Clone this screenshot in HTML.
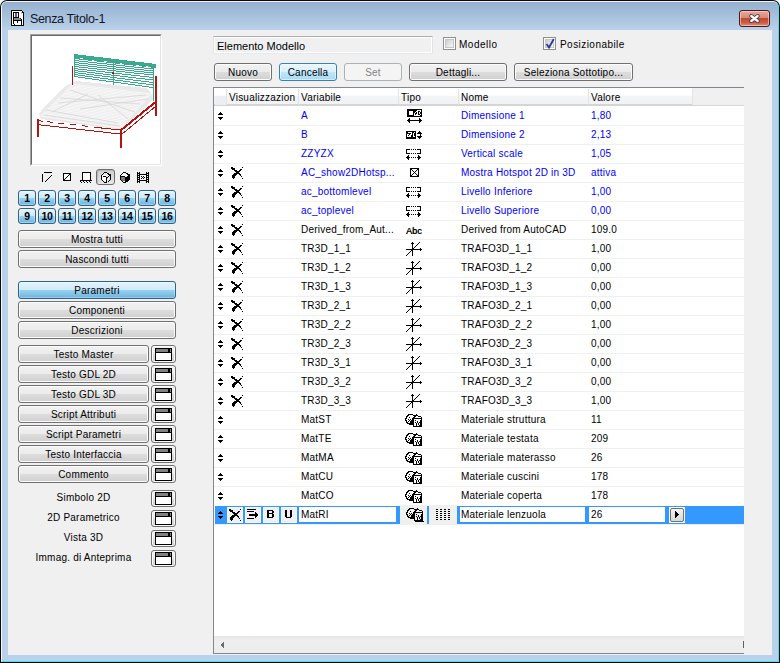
<!DOCTYPE html><html><head><meta charset="utf-8"><style>
*{margin:0;padding:0;box-sizing:border-box}
html,body{width:780px;height:663px;overflow:hidden;background:#fff}
body{position:relative;font-family:"Liberation Sans",sans-serif;font-size:11px;color:#000}
.t{position:absolute;white-space:nowrap;line-height:13px;font-size:10px;letter-spacing:0.22px}
.btn{position:absolute;border:1px solid #707070;border-radius:3px;background:linear-gradient(#f2f2f2 0%,#ebebeb 50%,#dddddd 51%,#cfcfcf 100%);box-shadow:inset 0 0 0 1px #fcfcfc;text-align:center;line-height:16px;padding-top:1px;white-space:nowrap;font-size:10px;letter-spacing:0.22px}
.nb{position:absolute;width:18px;height:16px;border:1px solid #2c628b;border-radius:3px;background:linear-gradient(#e5f4fc 0%,#cde9f8 48%,#98d1ef 52%,#6cb5df 100%);box-shadow:inset 0 0 0 1px rgba(255,255,255,.35);font-weight:bold;font-size:10.5px;text-align:center;line-height:15px;letter-spacing:-0.3px}
.wb{position:absolute;width:25px;height:18px;border:1px solid #707070;border-radius:3px;background:linear-gradient(#f2f2f2 0%,#ebebeb 50%,#dddddd 51%,#cfcfcf 100%);box-shadow:inset 0 0 0 1px #fcfcfc}
.wi{position:absolute;left:3px;top:2px;width:17px;height:13px;border:1px solid #000;background:#fff}
.wi:before{content:"";position:absolute;left:0;top:0;width:15px;height:3px;background:#808080;border-bottom:1px solid #000}
.wi:after{content:"";position:absolute;right:1px;top:0;width:2px;height:3px;background:#000}
.row{position:absolute;left:214px;width:530px;height:19px;border-bottom:1px solid #f0f0f0}
svg{position:absolute;shape-rendering:crispEdges}
</style></head><body>
<div style="position:absolute;left:0px;top:0px;width:780px;height:663px;background:#0a0a0a;border-radius:7px 7px 0 0;"></div>
<div style="position:absolute;left:1px;top:1px;width:778px;height:661px;background:#b9d1ea;border-radius:6px 6px 0 0;border-left:1px solid #f4f8fc;border-top:1px solid #eef4fa;border-right:1px solid #3ee4f4;border-bottom:1px solid #3ee4f4;"></div>
<div style="position:absolute;left:2px;top:2px;width:776px;height:28px;background:linear-gradient(#95b1cf,#b9d1ea);border-radius:5px 5px 0 0;"></div>
<div style="position:absolute;left:8px;top:30px;width:764px;height:625px;background:#f0f0f0;"></div>
<svg style="left:11px;top:10px" width="13" height="16" viewBox="11 10 13 16"><path d="M11 10h11v1h-11zM11 11h1v1h-1zM22 11h1v1h-1zM11 12h1v1h-1zM13 12h6v1h-6zM22 12h2v1h-2zM11 13h1v1h-1zM13 13h1v1h-1zM18 13h1v1h-1zM23 13h1v1h-1zM11 14h1v1h-1zM13 14h1v1h-1zM18 14h1v1h-1zM23 14h1v1h-1zM11 15h1v1h-1zM13 15h1v1h-1zM18 15h1v1h-1zM23 15h1v1h-1zM11 16h1v1h-1zM13 16h1v1h-1zM18 16h1v1h-1zM23 16h1v1h-1zM11 17h1v1h-1zM13 17h6v1h-6zM23 17h1v1h-1zM11 18h1v1h-1zM13 18h1v1h-1zM20 18h1v1h-1zM23 18h1v1h-1zM11 19h1v1h-1zM13 19h1v1h-1zM21 19h1v1h-1zM23 19h1v1h-1zM11 20h1v1h-1zM13 20h9v1h-9zM23 20h1v1h-1zM11 21h1v1h-1zM13 21h1v1h-1zM17 21h1v1h-1zM21 21h1v1h-1zM23 21h1v1h-1zM11 22h1v1h-1zM13 22h1v1h-1zM17 22h1v1h-1zM21 22h1v1h-1zM23 22h1v1h-1zM11 23h1v1h-1zM13 23h1v1h-1zM21 23h1v1h-1zM23 23h1v1h-1zM11 24h1v1h-1zM14 24h1v1h-1zM21 24h1v1h-1zM23 24h1v1h-1zM11 25h13v1h-13z" fill="#000"/><path d="M12 11h10v1h-10zM12 12h1v1h-1zM19 12h2v1h-2zM12 13h1v1h-1zM14 13h1v1h-1zM17 13h1v1h-1zM19 13h2v1h-2zM22 13h1v1h-1zM12 14h1v1h-1zM14 14h1v1h-1zM17 14h1v1h-1zM19 14h4v1h-4zM12 15h1v1h-1zM14 15h1v1h-1zM17 15h1v1h-1zM19 15h4v1h-4zM12 16h1v1h-1zM14 16h1v1h-1zM17 16h1v1h-1zM19 16h4v1h-4zM12 17h1v1h-1zM19 17h4v1h-4zM12 18h1v1h-1zM21 18h2v1h-2zM12 19h1v1h-1zM22 19h1v1h-1zM12 20h1v1h-1zM22 20h1v1h-1zM12 21h1v1h-1zM14 21h3v1h-3zM18 21h3v1h-3zM22 21h1v1h-1zM12 22h1v1h-1zM14 22h3v1h-3zM18 22h3v1h-3zM22 22h1v1h-1zM12 23h1v1h-1zM14 23h7v1h-7zM22 23h1v1h-1zM12 24h2v1h-2zM15 24h6v1h-6zM22 24h1v1h-1z" fill="#fff"/><path d="M15 13h2v1h-2zM15 14h2v1h-2zM15 15h2v1h-2zM15 16h2v1h-2z" fill="#5a5aa0"/><path d="M14 18h6v1h-6zM14 19h7v1h-7z" fill="#8a8a8a"/></svg>
<div class="t" style="left:30px;top:11px;font-size:12.5px;line-height:16px;letter-spacing:-0.35px;color:#141428">Senza Titolo-1</div>
<div style="position:absolute;left:739px;top:10px;width:31px;height:17px;border:1px solid #4a1820;border-radius:3px;background:linear-gradient(#eaa89a 0%,#d98a78 45%,#c14a30 50%,#c85a40 75%,#e08a70 100%);box-shadow:inset 0 0 0 1px rgba(255,220,210,.6)"></div>
<svg style="left:747px;top:12px;shape-rendering:auto" width="15" height="13" viewBox="0 0 15 13"><path d="M4.3 4L10.7 9M10.7 4L4.3 9" stroke="#3a2a40" stroke-width="4" stroke-linecap="round"/><path d="M4.3 4L10.7 9M10.7 4L4.3 9" stroke="#fff" stroke-width="2.3" stroke-linecap="round"/></svg>
<div style="position:absolute;left:30px;top:34px;width:132px;height:132px;background:#fff;border-top:1px solid #a0a0a0;border-left:1px solid #a0a0a0;border-right:1px solid #fff;border-bottom:1px solid #fff;"></div>
<div style="position:absolute;left:31px;top:35px;width:130px;height:130px;border-top:1px solid #696969;border-left:1px solid #696969;border-right:1px solid #e3e3e3;border-bottom:1px solid #e3e3e3;"></div>
<svg style="left:32px;top:36px;shape-rendering:crispEdges" width="128" height="128" viewBox="32 36 128 128">
<path d="M39 114 L44 107 L66 86 L76 81 L146 88 L151 92 L153 100 L122 128 L116 129 L41 119 Z" fill="#e9e9e9"/>
<path d="M40.0 116.0 L121.0 128.0 M41.3 114.7 L122.2 126.6 M42.6 113.4 L123.5 125.3 M43.8 112.2 L124.7 123.9 M45.1 110.9 L126.0 122.6 M46.4 109.6 L127.2 121.2 M47.7 108.3 L128.4 119.8 M49.0 107.0 L129.7 118.5 M50.2 105.8 L130.9 117.1 M51.5 104.5 L132.2 115.8 M52.8 103.2 L133.4 114.4 M54.1 101.9 L134.6 113.0 M55.4 100.6 L135.9 111.7 M56.6 99.4 L137.1 110.3 M57.9 98.1 L138.4 109.0 M59.2 96.8 L139.6 107.6 M60.5 95.5 L140.8 106.2 M61.8 94.2 L142.1 104.9 M63.0 93.0 L143.3 103.5 M64.3 91.7 L144.6 102.2 M65.6 90.4 L145.8 100.8 M66.9 89.1 L147.0 99.4 M68.2 87.8 L148.3 98.1 M69.4 86.6 L149.5 96.7 M70.7 85.3 L150.8 95.4 M72.0 84.0 L152.0 94.0" stroke="#fbfbfb" stroke-width="0.8" fill="none" style="shape-rendering:auto"/>
<path d="M46 110 L118 123 M60 98 L140 104 M70 90 L135 112 M52 112 L88 94 M98 95 L128 119 M58 103 L146 95 M80 109 L148 99 M44 115 L120 126" stroke="#d9d9d9" stroke-width="0.9" fill="none" style="shape-rendering:auto"/>
<path d="M74 54 L156 64 L156 68 L74 59 Z" fill="#3aa98e"/>
<path d="M80 58.5h3M92 60h2M104 61h3M120 63h2M136 65h3M146 66h2" stroke="#fff" stroke-width="1"/>
<path d="M74 60.5 L153 69 M74 62.5 L153 71 M74 64.5 L153 73 M74 66.5 L153 75 M74 68.5 L153 77.5 M74 70.5 L153 80 M74 72.5 L153 82.5 M74 74.5 L153 85 M74 76.5 L153 87.5 " stroke="#3aa98e" stroke-width="1" fill="none"/>
<path d="M74 54 L74 77 M113 61 L113 85 M153 66 L153 101" stroke="#3aa98e" stroke-width="1" fill="none"/>
<path d="M72.5 66 L72.5 85" stroke="#b4140f" stroke-width="1.3" fill="none"/>
<rect x="112" y="72" width="2" height="2" fill="#b4140f"/>
<path d="M155.5 76 L155.5 116" stroke="#b4140f" stroke-width="2" fill="none"/>
<path d="M37.5 119 L37.5 137 M120.5 130 L120.5 148" stroke="#b4140f" stroke-width="2" fill="none"/>
<path d="M37 124.5 L120 134" stroke="#b4140f" stroke-width="1" fill="none"/>
<path d="M37 120.5 L43 121.2 M47 121.7 L53 122.4 M58 123 L64 123.7 M70 124.4 L76 125 M82 125.7 L88 126.4 M94 127.2 L120 130" stroke="#b4140f" stroke-width="1" fill="none"/>
<path d="M120 131 L155.5 102" stroke="#b4140f" stroke-width="2" fill="none"/>
<path d="M121.5 134.5 L156 106" stroke="#b4140f" stroke-width="1" fill="none"/>
</svg>
<div style="position:absolute;left:96px;top:169px;width:19px;height:16px;border:1px solid #6f6f6f;border-radius:3px;background:linear-gradient(#cfcfcf,#e6e6e6);box-shadow:inset 1px 1px 1px #b8b8b8"></div>
<svg style="left:40px;top:170px" width="115" height="16" viewBox="40 170 115 16"><rect x="82" y="172" width="9" height="8" fill="#fff"/><rect x="64" y="174" width="6" height="6" fill="#fff"/><rect x="102" y="173" width="8" height="9" fill="#f4f4f4" opacity=".6"/><path d="M102 175h4v1h-4zM102 176h4v5h-4z" fill="#fff"/><path d="M121 174h6v1h-6zM122 173h3v1h-3zM121 175h6v1h-6z" fill="#fff"/><rect x="121" y="177" width="4" height="4" fill="#7a7a7a"/><rect x="140" y="175" width="6" height="5" fill="#fff"/><path d="M44 172h8v1h-8zM42 174h1v1h-1zM42 175h1v1h-1zM51 175h1v1h-1zM42 176h1v1h-1zM50 176h1v1h-1zM42 177h1v1h-1zM49 177h1v1h-1zM42 178h1v1h-1zM48 178h1v1h-1zM42 179h1v1h-1zM47 179h1v1h-1zM42 180h1v1h-1zM46 180h1v1h-1zM42 181h1v1h-1zM45 181h1v1h-1z" fill="#000"/><path d="M63 173h8v1h-8zM63 174h1v1h-1zM69 174h2v1h-2zM63 175h1v1h-1zM68 175h1v1h-1zM70 175h1v1h-1zM63 176h1v1h-1zM67 176h1v1h-1zM70 176h1v1h-1zM63 177h1v1h-1zM66 177h1v1h-1zM70 177h1v1h-1zM63 178h1v1h-1zM65 178h1v1h-1zM70 178h1v1h-1zM63 179h2v1h-2zM70 179h1v1h-1zM63 180h8v1h-8z" fill="#000"/><path d="M82 172h9v1h-9zM82 173h1v1h-1zM90 173h1v1h-1zM82 174h1v1h-1zM90 174h1v1h-1zM82 175h1v1h-1zM90 175h1v1h-1zM82 176h1v1h-1zM90 176h1v1h-1zM82 177h1v1h-1zM90 177h1v1h-1zM82 178h1v1h-1zM90 178h1v1h-1zM82 179h1v1h-1zM90 179h1v1h-1z" fill="#000"/><path d="M80 180h12v1h-12zM80 181h1v1h-1zM83 181h1v1h-1zM86 181h1v1h-1zM89 181h1v1h-1zM81 182h1v1h-1zM84 182h1v1h-1zM87 182h1v1h-1zM90 182h1v1h-1z" fill="#000"/><path d="M104 172h3v1h-3zM103 173h1v1h-1zM107 173h2v1h-2zM102 174h1v1h-1zM108 174h3v1h-3zM101 175h1v1h-1zM109 175h2v1h-2zM101 176h1v1h-1zM103 176h3v1h-3zM108 176h1v1h-1zM110 176h1v1h-1zM101 177h1v1h-1zM106 177h2v1h-2zM110 177h1v1h-1zM101 178h1v1h-1zM106 178h1v1h-1zM110 178h1v1h-1zM101 179h1v1h-1zM106 179h1v1h-1zM110 179h1v1h-1zM102 180h1v1h-1zM106 180h1v1h-1zM109 180h1v1h-1zM103 181h1v1h-1zM106 181h1v1h-1zM108 181h1v1h-1zM104 182h3v1h-3z" fill="#000"/><path d="M123 172h3v1h-3zM122 173h1v1h-1zM126 173h2v1h-2zM121 174h1v1h-1zM127 174h3v1h-3zM120 175h1v1h-1zM128 175h2v1h-2zM120 176h5v1h-5zM127 176h3v1h-3zM120 177h1v1h-1zM125 177h5v1h-5zM120 178h1v1h-1zM125 178h5v1h-5zM120 179h1v1h-1zM125 179h5v1h-5zM121 180h1v1h-1zM125 180h4v1h-4zM122 181h1v1h-1zM125 181h3v1h-3zM123 182h3v1h-3z" fill="#000"/><path d="M137 172h1v1h-1zM139 172h1v1h-1zM146 172h1v1h-1zM148 172h1v1h-1zM137 173h3v1h-3zM146 173h3v1h-3zM137 174h1v1h-1zM139 174h8v1h-8zM148 174h1v1h-1zM137 175h3v1h-3zM146 175h3v1h-3zM137 176h1v1h-1zM139 176h1v1h-1zM141 176h1v1h-1zM143 176h1v1h-1zM146 176h1v1h-1zM148 176h1v1h-1zM137 177h3v1h-3zM142 177h1v1h-1zM144 177h1v1h-1zM146 177h3v1h-3zM137 178h1v1h-1zM139 178h1v1h-1zM141 178h1v1h-1zM143 178h1v1h-1zM146 178h1v1h-1zM148 178h1v1h-1zM137 179h3v1h-3zM146 179h3v1h-3zM137 180h1v1h-1zM139 180h8v1h-8zM148 180h1v1h-1zM137 181h3v1h-3zM146 181h3v1h-3zM137 182h1v1h-1zM139 182h1v1h-1zM146 182h1v1h-1zM148 182h1v1h-1z" fill="#000"/></svg>
<div class="nb" style="left:18px;top:190px">1</div>
<div class="nb" style="left:38px;top:190px">2</div>
<div class="nb" style="left:58px;top:190px">3</div>
<div class="nb" style="left:78px;top:190px">4</div>
<div class="nb" style="left:98px;top:190px">5</div>
<div class="nb" style="left:118px;top:190px">6</div>
<div class="nb" style="left:138px;top:190px">7</div>
<div class="nb" style="left:158px;top:190px">8</div>
<div class="nb" style="left:18px;top:208px">9</div>
<div class="nb" style="left:38px;top:208px">10</div>
<div class="nb" style="left:58px;top:208px">11</div>
<div class="nb" style="left:78px;top:208px">12</div>
<div class="nb" style="left:98px;top:208px">13</div>
<div class="nb" style="left:118px;top:208px">14</div>
<div class="nb" style="left:138px;top:208px">15</div>
<div class="nb" style="left:158px;top:208px">16</div>
<div class="btn" style="left:18px;top:230px;width:158px;height:18px;">Mostra tutti</div>
<div class="btn" style="left:18px;top:250px;width:158px;height:18px;">Nascondi tutti</div>
<div class="btn" style="left:18px;top:281px;width:158px;height:18px;border-color:#2c628b;background:linear-gradient(#e5f4fc 0%,#cfeaf8 48%,#98d1ef 52%,#6cb4de 100%);box-shadow:inset 0 0 0 1px rgba(255,255,255,.3)">Parametri</div>
<div class="btn" style="left:18px;top:301px;width:158px;height:18px;">Componenti</div>
<div class="btn" style="left:18px;top:321px;width:158px;height:18px;">Descrizioni</div>
<div class="btn" style="left:18px;top:345px;width:131px;height:18px;">Testo Master</div>
<div class="wb" style="left:151px;top:345px"><div class="wi"></div></div>
<div class="btn" style="left:18px;top:365px;width:131px;height:18px;">Testo GDL 2D</div>
<div class="wb" style="left:151px;top:365px"><div class="wi"></div></div>
<div class="btn" style="left:18px;top:385px;width:131px;height:18px;">Testo GDL 3D</div>
<div class="wb" style="left:151px;top:385px"><div class="wi"></div></div>
<div class="btn" style="left:18px;top:405px;width:131px;height:18px;">Script Attributi</div>
<div class="wb" style="left:151px;top:405px"><div class="wi"></div></div>
<div class="btn" style="left:18px;top:425px;width:131px;height:18px;">Script Parametri</div>
<div class="wb" style="left:151px;top:425px"><div class="wi"></div></div>
<div class="btn" style="left:18px;top:445px;width:131px;height:18px;">Testo Interfaccia</div>
<div class="wb" style="left:151px;top:445px"><div class="wi"></div></div>
<div class="btn" style="left:18px;top:465px;width:131px;height:18px;">Commento</div>
<div class="wb" style="left:151px;top:465px"><div class="wi"></div></div>
<div class="t" style="left:18px;top:491px;width:131px;text-align:center">Simbolo 2D</div>
<div class="wb" style="left:151px;top:490px;height:17px"><div class="wi" style="top:1px"></div></div>
<div class="t" style="left:18px;top:511px;width:131px;text-align:center">2D Parametrico</div>
<div class="wb" style="left:151px;top:510px;height:17px"><div class="wi" style="top:1px"></div></div>
<div class="t" style="left:18px;top:531px;width:131px;text-align:center">Vista 3D</div>
<div class="wb" style="left:151px;top:530px;height:17px"><div class="wi" style="top:1px"></div></div>
<div class="t" style="left:18px;top:551px;width:131px;text-align:center">Immag. di Anteprima</div>
<div class="wb" style="left:151px;top:550px;height:17px"><div class="wi" style="top:1px"></div></div>
<div style="position:absolute;left:213px;top:36px;width:220px;height:18px;border:1px solid #abadb3;border-left-color:#e2e3ea;border-right-color:#e2e3ea;border-bottom-color:#e3e9ef;background:#f0f0f0;box-shadow:inset 0 0 0 1px #fff;border-radius:1px"></div>
<div class="t" style="left:217px;top:40px;font-size:11px;letter-spacing:0">Elemento Modello</div>
<div style="position:absolute;left:443px;top:37px;width:13px;height:13px;border:1px solid #8e8f8f;background:#fff"><div style="position:absolute;left:1px;top:1px;width:9px;height:9px;border:1px solid #c6c6c6;background:linear-gradient(135deg,#cbcfd5,#f6f6f6)"></div></div>
<div class="t" style="left:459px;top:38px;letter-spacing:0.5px">Modello</div>
<div style="position:absolute;left:543px;top:37px;width:13px;height:13px;border:1px solid #8e8f8f;background:#fff"><div style="position:absolute;left:1px;top:1px;width:9px;height:9px;border:1px solid #c6c6c6;background:linear-gradient(135deg,#cbcfd5,#f6f6f6)"></div></div>
<svg style="left:545px;top:38px;shape-rendering:auto" width="10" height="11" viewBox="0 0 10 11"><path d="M1.5 6 L4 9.5 L8.8 1" stroke="#2a3a90" stroke-width="1.8" fill="none"/></svg>
<div class="t" style="left:560px;top:38px;letter-spacing:0.45px">Posizionabile</div>
<div class="btn" style="left:214px;top:63px;width:58px;height:18px;">Nuovo</div>
<div class="btn" style="left:279px;top:63px;width:58px;height:18px;border-color:#3c7fb1;background:linear-gradient(#eaf6fd 0%,#d9f0fc 50%,#bee6fd 51%,#a7d9f5 100%);box-shadow:inset 0 0 0 1px rgba(255,255,255,.5)">Cancella</div>
<div class="btn" style="left:344px;top:63px;width:58px;height:18px;border-color:#adb2b5;background:#f4f4f4;box-shadow:none;color:#838383">Set</div>
<div class="btn" style="left:409px;top:63px;width:98px;height:18px;">Dettagli...</div>
<div class="btn" style="left:514px;top:63px;width:119px;height:18px;">Seleziona Sottotipo...</div>
<div style="position:absolute;left:213px;top:87px;width:531px;height:567px;background:#fff;border-left:1px solid #828790;border-top:1px solid #828790;border-bottom:1px solid #828790;"></div>
<div style="position:absolute;left:692px;top:88px;width:52px;height:18px;background:#f0f0f0;"></div>
<div style="position:absolute;left:214px;top:88px;width:478px;height:17px;background:linear-gradient(#fff 0%,#fff 45%,#f3f4f6 50%,#f1f2f4 100%);border-bottom:1px solid #d5d5d5"></div>
<div style="position:absolute;left:214px;top:105px;width:530px;height:1px;background:#d5d5d5"></div>
<div style="position:absolute;left:226px;top:89px;width:1px;height:16px;background:#e2e3e5"></div>
<div style="position:absolute;left:298px;top:89px;width:1px;height:16px;background:#e2e3e5"></div>
<div style="position:absolute;left:398px;top:89px;width:1px;height:16px;background:#e2e3e5"></div>
<div style="position:absolute;left:458px;top:89px;width:1px;height:16px;background:#e2e3e5"></div>
<div style="position:absolute;left:588px;top:89px;width:1px;height:16px;background:#e2e3e5"></div>
<div style="position:absolute;left:692px;top:89px;width:1px;height:16px;background:#e2e3e5"></div>
<div style="position:absolute;left:215px;top:96px;width:11px;height:9px;background:#eceef1"></div>
<div class="t" style="left:229px;top:91px;">Visualizzazion</div>
<div class="t" style="left:301px;top:91px;">Variabile</div>
<div class="t" style="left:401px;top:91px;">Tipo</div>
<div class="t" style="left:461px;top:91px;">Nome</div>
<div class="t" style="left:591px;top:91px;">Valore</div>
<div style="position:absolute;left:214px;top:125px;width:530px;height:1px;background:#f0f0f0"></div>
<div style="position:absolute;left:214px;top:144px;width:530px;height:1px;background:#f0f0f0"></div>
<div style="position:absolute;left:214px;top:163px;width:530px;height:1px;background:#f0f0f0"></div>
<div style="position:absolute;left:214px;top:182px;width:530px;height:1px;background:#f0f0f0"></div>
<div style="position:absolute;left:214px;top:201px;width:530px;height:1px;background:#f0f0f0"></div>
<div style="position:absolute;left:214px;top:220px;width:530px;height:1px;background:#f0f0f0"></div>
<div style="position:absolute;left:214px;top:239px;width:530px;height:1px;background:#f0f0f0"></div>
<div style="position:absolute;left:214px;top:258px;width:530px;height:1px;background:#f0f0f0"></div>
<div style="position:absolute;left:214px;top:277px;width:530px;height:1px;background:#f0f0f0"></div>
<div style="position:absolute;left:214px;top:296px;width:530px;height:1px;background:#f0f0f0"></div>
<div style="position:absolute;left:214px;top:315px;width:530px;height:1px;background:#f0f0f0"></div>
<div style="position:absolute;left:214px;top:334px;width:530px;height:1px;background:#f0f0f0"></div>
<div style="position:absolute;left:214px;top:353px;width:530px;height:1px;background:#f0f0f0"></div>
<div style="position:absolute;left:214px;top:372px;width:530px;height:1px;background:#f0f0f0"></div>
<div style="position:absolute;left:214px;top:391px;width:530px;height:1px;background:#f0f0f0"></div>
<div style="position:absolute;left:214px;top:410px;width:530px;height:1px;background:#f0f0f0"></div>
<div style="position:absolute;left:214px;top:429px;width:530px;height:1px;background:#f0f0f0"></div>
<div style="position:absolute;left:214px;top:448px;width:530px;height:1px;background:#f0f0f0"></div>
<div style="position:absolute;left:214px;top:467px;width:530px;height:1px;background:#f0f0f0"></div>
<div style="position:absolute;left:214px;top:486px;width:530px;height:1px;background:#f0f0f0"></div>
<div style="position:absolute;left:214px;top:505px;width:530px;height:1px;background:#f0f0f0"></div>
<div style="position:absolute;left:214px;top:524px;width:530px;height:1px;background:#f0f0f0"></div>
<div class="t" style="left:301px;top:109px;color:#0000ff">A</div>
<div class="t" style="left:461px;top:109px;color:#0000ff">Dimensione 1</div>
<div class="t" style="left:591px;top:109px;color:#0000ff">1,80</div>
<div class="t" style="left:301px;top:128px;color:#0000ff">B</div>
<div class="t" style="left:461px;top:128px;color:#0000ff">Dimensione 2</div>
<div class="t" style="left:591px;top:128px;color:#0000ff">2,13</div>
<div class="t" style="left:301px;top:147px;color:#0000ff">ZZYZX</div>
<div class="t" style="left:461px;top:147px;color:#0000ff">Vertical scale</div>
<div class="t" style="left:591px;top:147px;color:#0000ff">1,05</div>
<div class="t" style="left:301px;top:166px;color:#0000ff">AC_show2DHotsp...</div>
<div class="t" style="left:461px;top:166px;color:#0000ff">Mostra Hotspot 2D in 3D</div>
<div class="t" style="left:591px;top:166px;color:#0000ff">attiva</div>
<div class="t" style="left:301px;top:185px;color:#0000ff">ac_bottomlevel</div>
<div class="t" style="left:461px;top:185px;color:#0000ff">Livello Inferiore</div>
<div class="t" style="left:591px;top:185px;color:#0000ff">1,00</div>
<div class="t" style="left:301px;top:204px;color:#0000ff">ac_toplevel</div>
<div class="t" style="left:461px;top:204px;color:#0000ff">Livello Superiore</div>
<div class="t" style="left:591px;top:204px;color:#0000ff">0,00</div>
<div class="t" style="left:301px;top:223px;color:#000">Derived_from_Aut...</div>
<div class="t" style="left:461px;top:223px;color:#000">Derived from AutoCAD</div>
<div class="t" style="left:591px;top:223px;color:#000">109.0</div>
<div class="t" style="left:406px;top:225px;font-size:9px;letter-spacing:0.1px;text-shadow:0.35px 0 0 #000">Abc</div>
<div class="t" style="left:301px;top:242px;color:#000">TR3D_1_1</div>
<div class="t" style="left:461px;top:242px;color:#000">TRAFO3D_1_1</div>
<div class="t" style="left:591px;top:242px;color:#000">1,00</div>
<div class="t" style="left:301px;top:261px;color:#000">TR3D_1_2</div>
<div class="t" style="left:461px;top:261px;color:#000">TRAFO3D_1_2</div>
<div class="t" style="left:591px;top:261px;color:#000">0,00</div>
<div class="t" style="left:301px;top:280px;color:#000">TR3D_1_3</div>
<div class="t" style="left:461px;top:280px;color:#000">TRAFO3D_1_3</div>
<div class="t" style="left:591px;top:280px;color:#000">0,00</div>
<div class="t" style="left:301px;top:299px;color:#000">TR3D_2_1</div>
<div class="t" style="left:461px;top:299px;color:#000">TRAFO3D_2_1</div>
<div class="t" style="left:591px;top:299px;color:#000">0,00</div>
<div class="t" style="left:301px;top:318px;color:#000">TR3D_2_2</div>
<div class="t" style="left:461px;top:318px;color:#000">TRAFO3D_2_2</div>
<div class="t" style="left:591px;top:318px;color:#000">1,00</div>
<div class="t" style="left:301px;top:337px;color:#000">TR3D_2_3</div>
<div class="t" style="left:461px;top:337px;color:#000">TRAFO3D_2_3</div>
<div class="t" style="left:591px;top:337px;color:#000">0,00</div>
<div class="t" style="left:301px;top:356px;color:#000">TR3D_3_1</div>
<div class="t" style="left:461px;top:356px;color:#000">TRAFO3D_3_1</div>
<div class="t" style="left:591px;top:356px;color:#000">0,00</div>
<div class="t" style="left:301px;top:375px;color:#000">TR3D_3_2</div>
<div class="t" style="left:461px;top:375px;color:#000">TRAFO3D_3_2</div>
<div class="t" style="left:591px;top:375px;color:#000">0,00</div>
<div class="t" style="left:301px;top:394px;color:#000">TR3D_3_3</div>
<div class="t" style="left:461px;top:394px;color:#000">TRAFO3D_3_3</div>
<div class="t" style="left:591px;top:394px;color:#000">1,00</div>
<div class="t" style="left:301px;top:413px;color:#000">MatST</div>
<div class="t" style="left:461px;top:413px;color:#000">Materiale struttura</div>
<div class="t" style="left:591px;top:413px;color:#000">11</div>
<div class="t" style="left:301px;top:432px;color:#000">MatTE</div>
<div class="t" style="left:461px;top:432px;color:#000">Materiale testata</div>
<div class="t" style="left:591px;top:432px;color:#000">209</div>
<div class="t" style="left:301px;top:451px;color:#000">MatMA</div>
<div class="t" style="left:461px;top:451px;color:#000">Materiale materasso</div>
<div class="t" style="left:591px;top:451px;color:#000">26</div>
<div class="t" style="left:301px;top:470px;color:#000">MatCU</div>
<div class="t" style="left:461px;top:470px;color:#000">Materiale cuscini</div>
<div class="t" style="left:591px;top:470px;color:#000">178</div>
<div class="t" style="left:301px;top:489px;color:#000">MatCO</div>
<div class="t" style="left:461px;top:489px;color:#000">Materiale coperta</div>
<div class="t" style="left:591px;top:489px;color:#000">178</div>
<svg style="left:214px;top:107px" width="530" height="420" viewBox="214 107 530 420"><path d="M220 112h1v1h-1zM219 113h3v1h-3zM218 114h5v1h-5zM218 117h5v1h-5zM219 118h3v1h-3zM220 119h1v1h-1z" fill="#000"/><path d="M407 109h15v1h-15zM407 110h10v1h-10zM421 110h1v1h-1zM407 111h2v1h-2zM413 111h3v1h-3zM418 111h2v1h-2zM421 111h1v1h-1zM407 112h2v1h-2zM413 112h2v1h-2zM416 112h1v1h-1zM418 112h1v1h-1zM420 112h2v1h-2zM407 113h2v1h-2zM413 113h1v1h-1zM415 113h2v1h-2zM418 113h1v1h-1zM420 113h2v1h-2zM407 114h2v1h-2zM413 114h1v1h-1zM415 114h1v1h-1zM418 114h2v1h-2zM421 114h1v1h-1zM407 115h7v1h-7zM420 115h2v1h-2zM407 116h15v1h-15zM409 118h1v1h-1zM419 118h1v1h-1zM408 119h2v1h-2zM419 119h2v1h-2zM407 120h15v1h-15zM408 121h2v1h-2zM419 121h2v1h-2zM409 122h1v1h-1zM419 122h1v1h-1z" fill="#000"/><path d="M220 131h1v1h-1zM219 132h3v1h-3zM218 133h5v1h-5zM218 136h5v1h-5zM219 137h3v1h-3zM220 138h1v1h-1z" fill="#000"/><path d="M406 131h10v1h-10zM419 131h1v1h-1zM406 132h2v1h-2zM412 132h2v1h-2zM415 132h1v1h-1zM418 132h3v1h-3zM406 133h5v1h-5zM412 133h1v1h-1zM414 133h2v1h-2zM417 133h5v1h-5zM406 134h1v1h-1zM409 134h1v1h-1zM412 134h1v1h-1zM414 134h2v1h-2zM420 134h1v1h-1zM406 135h1v1h-1zM408 135h1v1h-1zM411 135h2v1h-2zM414 135h2v1h-2zM420 135h1v1h-1zM406 136h1v1h-1zM411 136h2v1h-2zM415 136h1v1h-1zM417 136h5v1h-5zM406 137h10v1h-10zM418 137h3v1h-3zM406 138h10v1h-10zM419 138h1v1h-1z" fill="#000"/><path d="M220 150h1v1h-1zM219 151h3v1h-3zM218 152h5v1h-5zM218 155h5v1h-5zM219 156h3v1h-3zM220 157h1v1h-1z" fill="#000"/><path d="M406 149h4v1h-4zM411 149h1v1h-1zM413 149h1v1h-1zM415 149h1v1h-1zM417 149h4v1h-4zM406 150h1v1h-1zM420 150h1v1h-1zM406 151h1v1h-1zM420 151h1v1h-1zM406 152h1v1h-1zM420 152h1v1h-1zM406 153h4v1h-4zM411 153h1v1h-1zM413 153h1v1h-1zM415 153h1v1h-1zM417 153h4v1h-4zM408 155h1v1h-1zM418 155h1v1h-1zM407 156h2v1h-2zM418 156h2v1h-2zM406 157h4v1h-4zM411 157h1v1h-1zM413 157h1v1h-1zM415 157h1v1h-1zM417 157h4v1h-4zM407 158h2v1h-2zM418 158h2v1h-2zM408 159h1v1h-1zM418 159h1v1h-1z" fill="#000"/><path d="M220 169h1v1h-1zM219 170h3v1h-3zM218 171h5v1h-5zM218 174h5v1h-5zM219 175h3v1h-3zM220 176h1v1h-1z" fill="#000"/><path d="M231 167h2v1h-2zM242 167h1v1h-1zM231 168h4v1h-4zM232 169h3v1h-3zM240 169h2v1h-2zM234 170h3v1h-3zM239 170h2v1h-2zM235 171h5v1h-5zM236 172h3v1h-3zM234 173h6v1h-6zM233 174h4v1h-4zM239 174h2v1h-2zM232 175h4v1h-4zM240 175h1v1h-1zM232 176h3v1h-3zM241 176h1v1h-1zM232 177h3v1h-3zM233 178h1v1h-1zM242 178h1v1h-1z" fill="#000"/><path d="M410 168h9v1h-9zM410 169h2v1h-2zM417 169h2v1h-2zM410 170h1v1h-1zM412 170h1v1h-1zM416 170h1v1h-1zM418 170h1v1h-1zM410 171h1v1h-1zM413 171h1v1h-1zM415 171h1v1h-1zM418 171h1v1h-1zM410 172h1v1h-1zM414 172h1v1h-1zM418 172h1v1h-1zM410 173h1v1h-1zM413 173h1v1h-1zM415 173h1v1h-1zM418 173h1v1h-1zM410 174h1v1h-1zM412 174h1v1h-1zM416 174h1v1h-1zM418 174h1v1h-1zM410 175h2v1h-2zM417 175h2v1h-2zM410 176h9v1h-9z" fill="#000"/><path d="M220 188h1v1h-1zM219 189h3v1h-3zM218 190h5v1h-5zM218 193h5v1h-5zM219 194h3v1h-3zM220 195h1v1h-1z" fill="#000"/><path d="M231 186h2v1h-2zM242 186h1v1h-1zM231 187h4v1h-4zM232 188h3v1h-3zM240 188h2v1h-2zM234 189h3v1h-3zM239 189h2v1h-2zM235 190h5v1h-5zM236 191h3v1h-3zM234 192h6v1h-6zM233 193h4v1h-4zM239 193h2v1h-2zM232 194h4v1h-4zM240 194h1v1h-1zM232 195h3v1h-3zM241 195h1v1h-1zM232 196h3v1h-3zM233 197h1v1h-1zM242 197h1v1h-1z" fill="#000"/><path d="M406 187h4v1h-4zM411 187h1v1h-1zM413 187h1v1h-1zM415 187h1v1h-1zM417 187h4v1h-4zM406 188h1v1h-1zM420 188h1v1h-1zM406 189h1v1h-1zM420 189h1v1h-1zM406 190h1v1h-1zM420 190h1v1h-1zM406 191h4v1h-4zM411 191h1v1h-1zM413 191h1v1h-1zM415 191h1v1h-1zM417 191h4v1h-4zM408 193h1v1h-1zM418 193h1v1h-1zM407 194h2v1h-2zM418 194h2v1h-2zM406 195h4v1h-4zM411 195h1v1h-1zM413 195h1v1h-1zM415 195h1v1h-1zM417 195h4v1h-4zM407 196h2v1h-2zM418 196h2v1h-2zM408 197h1v1h-1zM418 197h1v1h-1z" fill="#000"/><path d="M220 207h1v1h-1zM219 208h3v1h-3zM218 209h5v1h-5zM218 212h5v1h-5zM219 213h3v1h-3zM220 214h1v1h-1z" fill="#000"/><path d="M231 205h2v1h-2zM242 205h1v1h-1zM231 206h4v1h-4zM232 207h3v1h-3zM240 207h2v1h-2zM234 208h3v1h-3zM239 208h2v1h-2zM235 209h5v1h-5zM236 210h3v1h-3zM234 211h6v1h-6zM233 212h4v1h-4zM239 212h2v1h-2zM232 213h4v1h-4zM240 213h1v1h-1zM232 214h3v1h-3zM241 214h1v1h-1zM232 215h3v1h-3zM233 216h1v1h-1zM242 216h1v1h-1z" fill="#000"/><path d="M406 206h4v1h-4zM411 206h1v1h-1zM413 206h1v1h-1zM415 206h1v1h-1zM417 206h4v1h-4zM406 207h1v1h-1zM420 207h1v1h-1zM406 208h1v1h-1zM420 208h1v1h-1zM406 209h1v1h-1zM420 209h1v1h-1zM406 210h4v1h-4zM411 210h1v1h-1zM413 210h1v1h-1zM415 210h1v1h-1zM417 210h4v1h-4zM408 212h1v1h-1zM418 212h1v1h-1zM407 213h2v1h-2zM418 213h2v1h-2zM406 214h4v1h-4zM411 214h1v1h-1zM413 214h1v1h-1zM415 214h1v1h-1zM417 214h4v1h-4zM407 215h2v1h-2zM418 215h2v1h-2zM408 216h1v1h-1zM418 216h1v1h-1z" fill="#000"/><path d="M220 226h1v1h-1zM219 227h3v1h-3zM218 228h5v1h-5zM218 231h5v1h-5zM219 232h3v1h-3zM220 233h1v1h-1z" fill="#000"/><path d="M231 224h2v1h-2zM242 224h1v1h-1zM231 225h4v1h-4zM232 226h3v1h-3zM240 226h2v1h-2zM234 227h3v1h-3zM239 227h2v1h-2zM235 228h5v1h-5zM236 229h3v1h-3zM234 230h6v1h-6zM233 231h4v1h-4zM239 231h2v1h-2zM232 232h4v1h-4zM240 232h1v1h-1zM232 233h3v1h-3zM241 233h1v1h-1zM232 234h3v1h-3zM233 235h1v1h-1zM242 235h1v1h-1z" fill="#000"/><path d="M220 245h1v1h-1zM219 246h3v1h-3zM218 247h5v1h-5zM218 250h5v1h-5zM219 251h3v1h-3zM220 252h1v1h-1z" fill="#000"/><path d="M231 243h2v1h-2zM242 243h1v1h-1zM231 244h4v1h-4zM232 245h3v1h-3zM240 245h2v1h-2zM234 246h3v1h-3zM239 246h2v1h-2zM235 247h5v1h-5zM236 248h3v1h-3zM234 249h6v1h-6zM233 250h4v1h-4zM239 250h2v1h-2zM232 251h4v1h-4zM240 251h1v1h-1zM232 252h3v1h-3zM241 252h1v1h-1zM232 253h3v1h-3zM233 254h1v1h-1zM242 254h1v1h-1z" fill="#000"/><path d="M412 242h1v1h-1zM419 242h1v1h-1zM411 243h3v1h-3zM418 243h1v1h-1zM412 244h1v1h-1zM417 244h1v1h-1zM412 245h1v1h-1zM416 245h1v1h-1zM412 246h1v1h-1zM415 246h1v1h-1zM412 247h1v1h-1zM414 247h1v1h-1zM412 248h2v1h-2zM420 248h1v1h-1zM406 249h16v1h-16zM411 250h2v1h-2zM420 250h1v1h-1zM410 251h1v1h-1zM412 251h1v1h-1zM409 252h1v1h-1zM412 252h1v1h-1zM408 253h1v1h-1zM412 253h1v1h-1zM407 254h1v1h-1zM412 254h1v1h-1zM406 255h1v1h-1zM412 255h1v1h-1z" fill="#000"/><path d="M220 264h1v1h-1zM219 265h3v1h-3zM218 266h5v1h-5zM218 269h5v1h-5zM219 270h3v1h-3zM220 271h1v1h-1z" fill="#000"/><path d="M231 262h2v1h-2zM242 262h1v1h-1zM231 263h4v1h-4zM232 264h3v1h-3zM240 264h2v1h-2zM234 265h3v1h-3zM239 265h2v1h-2zM235 266h5v1h-5zM236 267h3v1h-3zM234 268h6v1h-6zM233 269h4v1h-4zM239 269h2v1h-2zM232 270h4v1h-4zM240 270h1v1h-1zM232 271h3v1h-3zM241 271h1v1h-1zM232 272h3v1h-3zM233 273h1v1h-1zM242 273h1v1h-1z" fill="#000"/><path d="M412 261h1v1h-1zM419 261h1v1h-1zM411 262h3v1h-3zM418 262h1v1h-1zM412 263h1v1h-1zM417 263h1v1h-1zM412 264h1v1h-1zM416 264h1v1h-1zM412 265h1v1h-1zM415 265h1v1h-1zM412 266h1v1h-1zM414 266h1v1h-1zM412 267h2v1h-2zM420 267h1v1h-1zM406 268h16v1h-16zM411 269h2v1h-2zM420 269h1v1h-1zM410 270h1v1h-1zM412 270h1v1h-1zM409 271h1v1h-1zM412 271h1v1h-1zM408 272h1v1h-1zM412 272h1v1h-1zM407 273h1v1h-1zM412 273h1v1h-1zM406 274h1v1h-1zM412 274h1v1h-1z" fill="#000"/><path d="M220 283h1v1h-1zM219 284h3v1h-3zM218 285h5v1h-5zM218 288h5v1h-5zM219 289h3v1h-3zM220 290h1v1h-1z" fill="#000"/><path d="M231 281h2v1h-2zM242 281h1v1h-1zM231 282h4v1h-4zM232 283h3v1h-3zM240 283h2v1h-2zM234 284h3v1h-3zM239 284h2v1h-2zM235 285h5v1h-5zM236 286h3v1h-3zM234 287h6v1h-6zM233 288h4v1h-4zM239 288h2v1h-2zM232 289h4v1h-4zM240 289h1v1h-1zM232 290h3v1h-3zM241 290h1v1h-1zM232 291h3v1h-3zM233 292h1v1h-1zM242 292h1v1h-1z" fill="#000"/><path d="M412 280h1v1h-1zM419 280h1v1h-1zM411 281h3v1h-3zM418 281h1v1h-1zM412 282h1v1h-1zM417 282h1v1h-1zM412 283h1v1h-1zM416 283h1v1h-1zM412 284h1v1h-1zM415 284h1v1h-1zM412 285h1v1h-1zM414 285h1v1h-1zM412 286h2v1h-2zM420 286h1v1h-1zM406 287h16v1h-16zM411 288h2v1h-2zM420 288h1v1h-1zM410 289h1v1h-1zM412 289h1v1h-1zM409 290h1v1h-1zM412 290h1v1h-1zM408 291h1v1h-1zM412 291h1v1h-1zM407 292h1v1h-1zM412 292h1v1h-1zM406 293h1v1h-1zM412 293h1v1h-1z" fill="#000"/><path d="M220 302h1v1h-1zM219 303h3v1h-3zM218 304h5v1h-5zM218 307h5v1h-5zM219 308h3v1h-3zM220 309h1v1h-1z" fill="#000"/><path d="M231 300h2v1h-2zM242 300h1v1h-1zM231 301h4v1h-4zM232 302h3v1h-3zM240 302h2v1h-2zM234 303h3v1h-3zM239 303h2v1h-2zM235 304h5v1h-5zM236 305h3v1h-3zM234 306h6v1h-6zM233 307h4v1h-4zM239 307h2v1h-2zM232 308h4v1h-4zM240 308h1v1h-1zM232 309h3v1h-3zM241 309h1v1h-1zM232 310h3v1h-3zM233 311h1v1h-1zM242 311h1v1h-1z" fill="#000"/><path d="M412 299h1v1h-1zM419 299h1v1h-1zM411 300h3v1h-3zM418 300h1v1h-1zM412 301h1v1h-1zM417 301h1v1h-1zM412 302h1v1h-1zM416 302h1v1h-1zM412 303h1v1h-1zM415 303h1v1h-1zM412 304h1v1h-1zM414 304h1v1h-1zM412 305h2v1h-2zM420 305h1v1h-1zM406 306h16v1h-16zM411 307h2v1h-2zM420 307h1v1h-1zM410 308h1v1h-1zM412 308h1v1h-1zM409 309h1v1h-1zM412 309h1v1h-1zM408 310h1v1h-1zM412 310h1v1h-1zM407 311h1v1h-1zM412 311h1v1h-1zM406 312h1v1h-1zM412 312h1v1h-1z" fill="#000"/><path d="M220 321h1v1h-1zM219 322h3v1h-3zM218 323h5v1h-5zM218 326h5v1h-5zM219 327h3v1h-3zM220 328h1v1h-1z" fill="#000"/><path d="M231 319h2v1h-2zM242 319h1v1h-1zM231 320h4v1h-4zM232 321h3v1h-3zM240 321h2v1h-2zM234 322h3v1h-3zM239 322h2v1h-2zM235 323h5v1h-5zM236 324h3v1h-3zM234 325h6v1h-6zM233 326h4v1h-4zM239 326h2v1h-2zM232 327h4v1h-4zM240 327h1v1h-1zM232 328h3v1h-3zM241 328h1v1h-1zM232 329h3v1h-3zM233 330h1v1h-1zM242 330h1v1h-1z" fill="#000"/><path d="M412 318h1v1h-1zM419 318h1v1h-1zM411 319h3v1h-3zM418 319h1v1h-1zM412 320h1v1h-1zM417 320h1v1h-1zM412 321h1v1h-1zM416 321h1v1h-1zM412 322h1v1h-1zM415 322h1v1h-1zM412 323h1v1h-1zM414 323h1v1h-1zM412 324h2v1h-2zM420 324h1v1h-1zM406 325h16v1h-16zM411 326h2v1h-2zM420 326h1v1h-1zM410 327h1v1h-1zM412 327h1v1h-1zM409 328h1v1h-1zM412 328h1v1h-1zM408 329h1v1h-1zM412 329h1v1h-1zM407 330h1v1h-1zM412 330h1v1h-1zM406 331h1v1h-1zM412 331h1v1h-1z" fill="#000"/><path d="M220 340h1v1h-1zM219 341h3v1h-3zM218 342h5v1h-5zM218 345h5v1h-5zM219 346h3v1h-3zM220 347h1v1h-1z" fill="#000"/><path d="M231 338h2v1h-2zM242 338h1v1h-1zM231 339h4v1h-4zM232 340h3v1h-3zM240 340h2v1h-2zM234 341h3v1h-3zM239 341h2v1h-2zM235 342h5v1h-5zM236 343h3v1h-3zM234 344h6v1h-6zM233 345h4v1h-4zM239 345h2v1h-2zM232 346h4v1h-4zM240 346h1v1h-1zM232 347h3v1h-3zM241 347h1v1h-1zM232 348h3v1h-3zM233 349h1v1h-1zM242 349h1v1h-1z" fill="#000"/><path d="M412 337h1v1h-1zM419 337h1v1h-1zM411 338h3v1h-3zM418 338h1v1h-1zM412 339h1v1h-1zM417 339h1v1h-1zM412 340h1v1h-1zM416 340h1v1h-1zM412 341h1v1h-1zM415 341h1v1h-1zM412 342h1v1h-1zM414 342h1v1h-1zM412 343h2v1h-2zM420 343h1v1h-1zM406 344h16v1h-16zM411 345h2v1h-2zM420 345h1v1h-1zM410 346h1v1h-1zM412 346h1v1h-1zM409 347h1v1h-1zM412 347h1v1h-1zM408 348h1v1h-1zM412 348h1v1h-1zM407 349h1v1h-1zM412 349h1v1h-1zM406 350h1v1h-1zM412 350h1v1h-1z" fill="#000"/><path d="M220 359h1v1h-1zM219 360h3v1h-3zM218 361h5v1h-5zM218 364h5v1h-5zM219 365h3v1h-3zM220 366h1v1h-1z" fill="#000"/><path d="M231 357h2v1h-2zM242 357h1v1h-1zM231 358h4v1h-4zM232 359h3v1h-3zM240 359h2v1h-2zM234 360h3v1h-3zM239 360h2v1h-2zM235 361h5v1h-5zM236 362h3v1h-3zM234 363h6v1h-6zM233 364h4v1h-4zM239 364h2v1h-2zM232 365h4v1h-4zM240 365h1v1h-1zM232 366h3v1h-3zM241 366h1v1h-1zM232 367h3v1h-3zM233 368h1v1h-1zM242 368h1v1h-1z" fill="#000"/><path d="M412 356h1v1h-1zM419 356h1v1h-1zM411 357h3v1h-3zM418 357h1v1h-1zM412 358h1v1h-1zM417 358h1v1h-1zM412 359h1v1h-1zM416 359h1v1h-1zM412 360h1v1h-1zM415 360h1v1h-1zM412 361h1v1h-1zM414 361h1v1h-1zM412 362h2v1h-2zM420 362h1v1h-1zM406 363h16v1h-16zM411 364h2v1h-2zM420 364h1v1h-1zM410 365h1v1h-1zM412 365h1v1h-1zM409 366h1v1h-1zM412 366h1v1h-1zM408 367h1v1h-1zM412 367h1v1h-1zM407 368h1v1h-1zM412 368h1v1h-1zM406 369h1v1h-1zM412 369h1v1h-1z" fill="#000"/><path d="M220 378h1v1h-1zM219 379h3v1h-3zM218 380h5v1h-5zM218 383h5v1h-5zM219 384h3v1h-3zM220 385h1v1h-1z" fill="#000"/><path d="M231 376h2v1h-2zM242 376h1v1h-1zM231 377h4v1h-4zM232 378h3v1h-3zM240 378h2v1h-2zM234 379h3v1h-3zM239 379h2v1h-2zM235 380h5v1h-5zM236 381h3v1h-3zM234 382h6v1h-6zM233 383h4v1h-4zM239 383h2v1h-2zM232 384h4v1h-4zM240 384h1v1h-1zM232 385h3v1h-3zM241 385h1v1h-1zM232 386h3v1h-3zM233 387h1v1h-1zM242 387h1v1h-1z" fill="#000"/><path d="M412 375h1v1h-1zM419 375h1v1h-1zM411 376h3v1h-3zM418 376h1v1h-1zM412 377h1v1h-1zM417 377h1v1h-1zM412 378h1v1h-1zM416 378h1v1h-1zM412 379h1v1h-1zM415 379h1v1h-1zM412 380h1v1h-1zM414 380h1v1h-1zM412 381h2v1h-2zM420 381h1v1h-1zM406 382h16v1h-16zM411 383h2v1h-2zM420 383h1v1h-1zM410 384h1v1h-1zM412 384h1v1h-1zM409 385h1v1h-1zM412 385h1v1h-1zM408 386h1v1h-1zM412 386h1v1h-1zM407 387h1v1h-1zM412 387h1v1h-1zM406 388h1v1h-1zM412 388h1v1h-1z" fill="#000"/><path d="M220 397h1v1h-1zM219 398h3v1h-3zM218 399h5v1h-5zM218 402h5v1h-5zM219 403h3v1h-3zM220 404h1v1h-1z" fill="#000"/><path d="M231 395h2v1h-2zM242 395h1v1h-1zM231 396h4v1h-4zM232 397h3v1h-3zM240 397h2v1h-2zM234 398h3v1h-3zM239 398h2v1h-2zM235 399h5v1h-5zM236 400h3v1h-3zM234 401h6v1h-6zM233 402h4v1h-4zM239 402h2v1h-2zM232 403h4v1h-4zM240 403h1v1h-1zM232 404h3v1h-3zM241 404h1v1h-1zM232 405h3v1h-3zM233 406h1v1h-1zM242 406h1v1h-1z" fill="#000"/><path d="M412 394h1v1h-1zM419 394h1v1h-1zM411 395h3v1h-3zM418 395h1v1h-1zM412 396h1v1h-1zM417 396h1v1h-1zM412 397h1v1h-1zM416 397h1v1h-1zM412 398h1v1h-1zM415 398h1v1h-1zM412 399h1v1h-1zM414 399h1v1h-1zM412 400h2v1h-2zM420 400h1v1h-1zM406 401h16v1h-16zM411 402h2v1h-2zM420 402h1v1h-1zM410 403h1v1h-1zM412 403h1v1h-1zM409 404h1v1h-1zM412 404h1v1h-1zM408 405h1v1h-1zM412 405h1v1h-1zM407 406h1v1h-1zM412 406h1v1h-1zM406 407h1v1h-1zM412 407h1v1h-1z" fill="#000"/><path d="M220 416h1v1h-1zM219 417h3v1h-3zM218 418h5v1h-5zM218 421h5v1h-5zM219 422h3v1h-3zM220 423h1v1h-1z" fill="#000"/><path d="M408 414h5v1h-5zM416 414h1v1h-1zM407 415h2v1h-2zM413 415h5v1h-5zM406 416h2v1h-2zM414 416h2v1h-2zM418 416h3v1h-3zM406 417h1v1h-1zM409 417h1v1h-1zM413 417h2v1h-2zM421 417h1v1h-1zM405 418h2v1h-2zM412 418h10v1h-10zM405 419h1v1h-1zM408 419h1v1h-1zM410 419h1v1h-1zM412 419h2v1h-2zM421 419h1v1h-1zM405 420h2v1h-2zM409 420h1v1h-1zM411 420h3v1h-3zM415 420h1v1h-1zM420 420h2v1h-2zM406 421h1v1h-1zM408 421h1v1h-1zM410 421h4v1h-4zM417 421h1v1h-1zM420 421h2v1h-2zM406 422h2v1h-2zM410 422h4v1h-4zM415 422h1v1h-1zM417 422h1v1h-1zM419 422h3v1h-3zM407 423h7v1h-7zM416 423h1v1h-1zM418 423h1v1h-1zM420 423h2v1h-2zM409 424h5v1h-5zM416 424h1v1h-1zM418 424h1v1h-1zM420 424h2v1h-2zM413 425h1v1h-1zM416 425h1v1h-1zM419 425h3v1h-3zM413 426h9v1h-9z" fill="#000"/><path d="M220 435h1v1h-1zM219 436h3v1h-3zM218 437h5v1h-5zM218 440h5v1h-5zM219 441h3v1h-3zM220 442h1v1h-1z" fill="#000"/><path d="M408 433h5v1h-5zM416 433h1v1h-1zM407 434h2v1h-2zM413 434h5v1h-5zM406 435h2v1h-2zM414 435h2v1h-2zM418 435h3v1h-3zM406 436h1v1h-1zM409 436h1v1h-1zM413 436h2v1h-2zM421 436h1v1h-1zM405 437h2v1h-2zM412 437h10v1h-10zM405 438h1v1h-1zM408 438h1v1h-1zM410 438h1v1h-1zM412 438h2v1h-2zM421 438h1v1h-1zM405 439h2v1h-2zM409 439h1v1h-1zM411 439h3v1h-3zM415 439h1v1h-1zM420 439h2v1h-2zM406 440h1v1h-1zM408 440h1v1h-1zM410 440h4v1h-4zM417 440h1v1h-1zM420 440h2v1h-2zM406 441h2v1h-2zM410 441h4v1h-4zM415 441h1v1h-1zM417 441h1v1h-1zM419 441h3v1h-3zM407 442h7v1h-7zM416 442h1v1h-1zM418 442h1v1h-1zM420 442h2v1h-2zM409 443h5v1h-5zM416 443h1v1h-1zM418 443h1v1h-1zM420 443h2v1h-2zM413 444h1v1h-1zM416 444h1v1h-1zM419 444h3v1h-3zM413 445h9v1h-9z" fill="#000"/><path d="M220 454h1v1h-1zM219 455h3v1h-3zM218 456h5v1h-5zM218 459h5v1h-5zM219 460h3v1h-3zM220 461h1v1h-1z" fill="#000"/><path d="M408 452h5v1h-5zM416 452h1v1h-1zM407 453h2v1h-2zM413 453h5v1h-5zM406 454h2v1h-2zM414 454h2v1h-2zM418 454h3v1h-3zM406 455h1v1h-1zM409 455h1v1h-1zM413 455h2v1h-2zM421 455h1v1h-1zM405 456h2v1h-2zM412 456h10v1h-10zM405 457h1v1h-1zM408 457h1v1h-1zM410 457h1v1h-1zM412 457h2v1h-2zM421 457h1v1h-1zM405 458h2v1h-2zM409 458h1v1h-1zM411 458h3v1h-3zM415 458h1v1h-1zM420 458h2v1h-2zM406 459h1v1h-1zM408 459h1v1h-1zM410 459h4v1h-4zM417 459h1v1h-1zM420 459h2v1h-2zM406 460h2v1h-2zM410 460h4v1h-4zM415 460h1v1h-1zM417 460h1v1h-1zM419 460h3v1h-3zM407 461h7v1h-7zM416 461h1v1h-1zM418 461h1v1h-1zM420 461h2v1h-2zM409 462h5v1h-5zM416 462h1v1h-1zM418 462h1v1h-1zM420 462h2v1h-2zM413 463h1v1h-1zM416 463h1v1h-1zM419 463h3v1h-3zM413 464h9v1h-9z" fill="#000"/><path d="M220 473h1v1h-1zM219 474h3v1h-3zM218 475h5v1h-5zM218 478h5v1h-5zM219 479h3v1h-3zM220 480h1v1h-1z" fill="#000"/><path d="M408 471h5v1h-5zM416 471h1v1h-1zM407 472h2v1h-2zM413 472h5v1h-5zM406 473h2v1h-2zM414 473h2v1h-2zM418 473h3v1h-3zM406 474h1v1h-1zM409 474h1v1h-1zM413 474h2v1h-2zM421 474h1v1h-1zM405 475h2v1h-2zM412 475h10v1h-10zM405 476h1v1h-1zM408 476h1v1h-1zM410 476h1v1h-1zM412 476h2v1h-2zM421 476h1v1h-1zM405 477h2v1h-2zM409 477h1v1h-1zM411 477h3v1h-3zM415 477h1v1h-1zM420 477h2v1h-2zM406 478h1v1h-1zM408 478h1v1h-1zM410 478h4v1h-4zM417 478h1v1h-1zM420 478h2v1h-2zM406 479h2v1h-2zM410 479h4v1h-4zM415 479h1v1h-1zM417 479h1v1h-1zM419 479h3v1h-3zM407 480h7v1h-7zM416 480h1v1h-1zM418 480h1v1h-1zM420 480h2v1h-2zM409 481h5v1h-5zM416 481h1v1h-1zM418 481h1v1h-1zM420 481h2v1h-2zM413 482h1v1h-1zM416 482h1v1h-1zM419 482h3v1h-3zM413 483h9v1h-9z" fill="#000"/><path d="M220 492h1v1h-1zM219 493h3v1h-3zM218 494h5v1h-5zM218 497h5v1h-5zM219 498h3v1h-3zM220 499h1v1h-1z" fill="#000"/><path d="M408 490h5v1h-5zM416 490h1v1h-1zM407 491h2v1h-2zM413 491h5v1h-5zM406 492h2v1h-2zM414 492h2v1h-2zM418 492h3v1h-3zM406 493h1v1h-1zM409 493h1v1h-1zM413 493h2v1h-2zM421 493h1v1h-1zM405 494h2v1h-2zM412 494h10v1h-10zM405 495h1v1h-1zM408 495h1v1h-1zM410 495h1v1h-1zM412 495h2v1h-2zM421 495h1v1h-1zM405 496h2v1h-2zM409 496h1v1h-1zM411 496h3v1h-3zM415 496h1v1h-1zM420 496h2v1h-2zM406 497h1v1h-1zM408 497h1v1h-1zM410 497h4v1h-4zM417 497h1v1h-1zM420 497h2v1h-2zM406 498h2v1h-2zM410 498h4v1h-4zM415 498h1v1h-1zM417 498h1v1h-1zM419 498h3v1h-3zM407 499h7v1h-7zM416 499h1v1h-1zM418 499h1v1h-1zM420 499h2v1h-2zM409 500h5v1h-5zM416 500h1v1h-1zM418 500h1v1h-1zM420 500h2v1h-2zM413 501h1v1h-1zM416 501h1v1h-1zM419 501h3v1h-3zM413 502h9v1h-9z" fill="#000"/></svg>
<div style="position:absolute;left:215px;top:505px;width:529px;height:19px;background:#fff"></div>
<div style="position:absolute;left:215px;top:506px;width:529px;height:18px;background:#3399ff"></div>
<div style="position:absolute;left:227px;top:507px;width:16px;height:16px;background:#f0f0f0;border:1px solid #f8f8f8"></div>
<div style="position:absolute;left:245px;top:507px;width:16px;height:16px;background:#f0f0f0;border:1px solid #f8f8f8"></div>
<div style="position:absolute;left:263px;top:507px;width:16px;height:16px;background:#f0f0f0;border:1px solid #f8f8f8"></div>
<div style="position:absolute;left:281px;top:507px;width:16px;height:16px;background:#f0f0f0;border:1px solid #f8f8f8"></div>
<div style="position:absolute;left:299px;top:507px;width:97px;height:15px;background:#fff"></div>
<div class="t" style="left:301px;top:508px">MatRI</div>
<div style="position:absolute;left:400px;top:505px;width:27px;height:20px;background:#f0f0f0"></div>
<div style="position:absolute;left:429px;top:505px;width:28px;height:20px;background:#f0f0f0"></div>
<div style="position:absolute;left:460px;top:507px;width:125px;height:15px;background:#fff"></div>
<div class="t" style="left:461px;top:508px">Materiale lenzuola</div>
<div style="position:absolute;left:589px;top:507px;width:76px;height:15px;background:#fff"></div>
<div class="t" style="left:591px;top:508px">26</div>
<div style="position:absolute;left:669px;top:507px;width:16px;height:16px;background:#fff"></div>
<div style="position:absolute;left:670px;top:508px;width:14px;height:14px;border:1px solid #707070;border-radius:2px;background:linear-gradient(#f2f2f2,#d8d8d8)"></div>
<svg style="left:214px;top:504px" width="530" height="24" viewBox="214 504 530 24"><path d="M220 511h1v1h-1zM219 512h3v1h-3zM218 513h5v1h-5zM218 516h5v1h-5zM219 517h3v1h-3zM220 518h1v1h-1z" fill="#000"/><path d="M675 511h1v1h-1zM675 512h2v1h-2zM675 513h3v1h-3zM675 514h4v1h-4zM675 515h3v1h-3zM675 516h2v1h-2zM675 517h1v1h-1z" fill="#000"/><path d="M229 509h2v1h-2zM240 509h1v1h-1zM229 510h4v1h-4zM230 511h3v1h-3zM238 511h2v1h-2zM232 512h3v1h-3zM237 512h2v1h-2zM233 513h5v1h-5zM234 514h3v1h-3zM232 515h6v1h-6zM231 516h4v1h-4zM237 516h2v1h-2zM230 517h4v1h-4zM238 517h1v1h-1zM230 518h3v1h-3zM239 518h1v1h-1zM230 519h3v1h-3zM231 520h1v1h-1zM240 520h1v1h-1z" fill="#000"/><path d="M247 509h9v1h-9zM247 511h7v1h-7zM255 512h1v1h-1zM255 513h2v1h-2zM249 514h9v1h-9zM249 515h9v1h-9zM255 516h2v1h-2zM255 517h1v1h-1zM247 518h7v1h-7z" fill="#000"/><path d="M267 510h6v1h-6zM267 511h2v1h-2zM272 511h2v1h-2zM267 512h2v1h-2zM272 512h2v1h-2zM267 513h6v1h-6zM267 514h2v1h-2zM272 514h2v1h-2zM267 515h2v1h-2zM272 515h2v1h-2zM267 516h2v1h-2zM272 516h2v1h-2zM267 517h6v1h-6z" fill="#000"/><path d="M285 510h2v1h-2zM290 510h2v1h-2zM285 511h2v1h-2zM290 511h2v1h-2zM285 512h2v1h-2zM290 512h2v1h-2zM285 513h2v1h-2zM290 513h2v1h-2zM285 514h2v1h-2zM290 514h2v1h-2zM285 515h2v1h-2zM290 515h2v1h-2zM285 516h2v1h-2zM290 516h2v1h-2zM286 517h5v1h-5z" fill="#000"/><path d="M409 508h5v1h-5zM417 508h1v1h-1zM408 509h2v1h-2zM414 509h5v1h-5zM407 510h2v1h-2zM415 510h2v1h-2zM419 510h3v1h-3zM407 511h1v1h-1zM410 511h1v1h-1zM414 511h2v1h-2zM422 511h1v1h-1zM406 512h2v1h-2zM413 512h10v1h-10zM406 513h1v1h-1zM409 513h1v1h-1zM411 513h1v1h-1zM413 513h2v1h-2zM422 513h1v1h-1zM406 514h2v1h-2zM410 514h1v1h-1zM412 514h3v1h-3zM416 514h1v1h-1zM421 514h2v1h-2zM407 515h1v1h-1zM409 515h1v1h-1zM411 515h4v1h-4zM418 515h1v1h-1zM421 515h2v1h-2zM407 516h2v1h-2zM411 516h4v1h-4zM416 516h1v1h-1zM418 516h1v1h-1zM420 516h3v1h-3zM408 517h7v1h-7zM417 517h1v1h-1zM419 517h1v1h-1zM421 517h2v1h-2zM410 518h5v1h-5zM417 518h1v1h-1zM419 518h1v1h-1zM421 518h2v1h-2zM414 519h1v1h-1zM417 519h1v1h-1zM420 519h3v1h-3zM414 520h9v1h-9zM415 521h9v1h-9z" fill="#000"/><path d="M436 509h2v1h-2zM440 509h2v1h-2zM444 509h2v1h-2zM448 509h2v1h-2zM436 511h2v1h-2zM440 511h2v1h-2zM444 511h2v1h-2zM448 511h2v1h-2zM436 513h2v1h-2zM440 513h2v1h-2zM444 513h2v1h-2zM448 513h2v1h-2zM436 515h2v1h-2zM440 515h2v1h-2zM444 515h2v1h-2zM448 515h2v1h-2zM436 517h2v1h-2zM440 517h2v1h-2zM444 517h2v1h-2zM448 517h2v1h-2zM436 519h2v1h-2zM440 519h2v1h-2zM444 519h2v1h-2zM448 519h2v1h-2z" fill="#000"/></svg>
<div style="position:absolute;left:214px;top:636px;width:530px;height:17px;background:linear-gradient(#e6e6e6,#efefef 30%,#ececec)"></div>
<svg style="left:220px;top:641px" width="5" height="8" viewBox="0 0 5 8"><path d="M4 0v8L0 4z" fill="#6c6c6c"/></svg>
<div style="position:absolute;left:743px;top:641px;width:1px;height:7px;background:#606060"></div>
</body></html>
